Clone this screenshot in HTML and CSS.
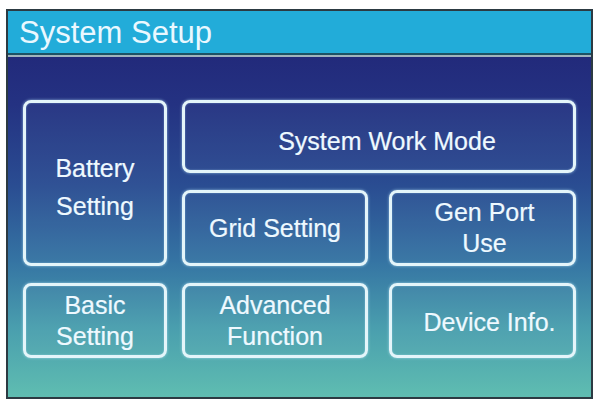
FILE: index.html
```html
<!DOCTYPE html>
<html>
<head>
<meta charset="utf-8">
<link rel="stylesheet" href="styles.css">
</head>
<body>
<div class="screen">
  <div class="titlebar"><span class="title">System Setup</span></div>
  <div class="content">
    <div class="menu">
      <div class="btn battery">Battery<br>Setting</div>
      <div class="btn workmode">System Work Mode</div>
      <div class="btn grid">Grid Setting</div>
      <div class="btn genport">Gen Port<br>Use</div>
      <div class="btn basic">Basic<br>Setting</div>
      <div class="btn advanced">Advanced<br>Function</div>
      <div class="btn device">Device Info.</div>
    </div>
  </div>
</div>
</body>
</html>
```
FILE: styles.css
```css
html, body {
  margin: 0;
  padding: 0;
  background: #ffffff;
}
body {
  font-family: "Liberation Sans", Arial, sans-serif;
}
.screen {
  margin: 9px 0 0 6px;
  width: 587px;
  height: 390px;
  box-sizing: border-box;
  border: 2px solid #2c3a42;
  display: flex;
  flex-direction: column;
  overflow: hidden;
}
.titlebar {
  height: 42px;
  background: #22acd9;
  border-bottom: 2px solid #1d5265;
  box-shadow: 0 2px 0 #9fb3bd;
  display: flex;
  align-items: center;
  padding-left: 11px;
  flex: none;
}
.title {
  color: #eaf8ff;
  font-size: 31px;
  line-height: 36px;
  margin-top: 1px;
}
.content {
  flex: 1;
  margin-top: 2px;
  background: linear-gradient(to bottom, #222a7b 0%, #243282 14%, #2a4d92 38%, #3574a3 60%, #4a9fae 80%, #5fbdb1 100%);
  padding: 43px 0 0 15px;
}
.menu {
  display: grid;
  grid-template-columns: 144px 15px 186px 21px 187px;
  grid-template-rows: 73px 76px 75px;
  row-gap: 17px;
}
.btn {
  box-sizing: border-box;
  border: 3px solid #e4f5fa;
  border-radius: 8px;
  box-shadow: 0 0 3px rgba(190, 235, 255, 0.7), inset 0 0 2px rgba(190, 235, 255, 0.5);
  background: rgba(255, 255, 255, 0.03);
  color: #eef9ff;
  font-size: 25px;
  line-height: 31px;
  display: flex;
  align-items: center;
  justify-content: center;
  text-align: center;
  -webkit-text-stroke: 0.2px #eef9ff;
}
.battery {
  grid-column: 1;
  grid-row: 1 / 3;
  line-height: 38px;
  padding-top: 8px;
}
.workmode {
  grid-column: 3 / 6;
  grid-row: 1;
  padding-left: 16px;
  padding-top: 9px;
}
.grid {
  grid-column: 3;
  grid-row: 2;
}
.genport {
  grid-column: 5;
  grid-row: 2;
  padding-left: 4px;
}
.basic {
  grid-column: 1;
  grid-row: 3;
}
.advanced {
  grid-column: 3;
  grid-row: 3;
}
.device {
  grid-column: 5;
  grid-row: 3;
  padding-left: 14px;
  padding-top: 4px;
}
```
